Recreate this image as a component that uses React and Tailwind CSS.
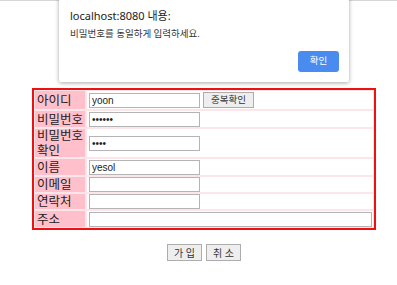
import React from "react";

const ko = "font-['Noto_Sans','Noto_Sans_CJK_KR',sans-serif]";

function Field({ value = "", type = "text", wide = false }) {
  return (
    <input
      type={type}
      defaultValue={value}
      readOnly
      className={`ml-[2px] h-[15px] border border-[#b4b4b4] bg-white px-[2px] text-[10px] leading-none text-[#222] outline-none font-['Liberation_Sans',Arial,sans-serif] ${
        wide ? "w-[283px]" : "w-[111px]"
      }`}
    />
  );
}

function Row({ label, h, children }) {
  return (
    <>
      <div
        className={`flex items-center bg-[#ffc0cb] pl-[2px] text-[12.5px] leading-[15px] text-[#222] ${ko} ${h}`}
      >
        {label}
      </div>
      <div className={`flex items-center bg-white ${h}`}>{children}</div>
    </>
  );
}

export default function App() {
  return (
    <div className="relative h-[285px] w-[397px] overflow-hidden bg-white">
      <div className="h-px w-full bg-[#d6d6d6]" />

      {/* alert dialog over the page */}
      <div
        className={`absolute left-[59px] top-[-8px] h-[90px] w-[290px] rounded-b-[2px] bg-white shadow-[0_1px_4px_rgba(0,0,0,0.35)] ${ko}`}
      >
        <p className="absolute left-[11px] top-[17px] text-[11px] leading-[14px] text-[#222]">
          localhost:8080 내용:
        </p>
        <p className="absolute left-[11px] top-[36px] text-[9.5px] leading-[12px] text-[#333]">
          비밀번호를 동일하게 입력하세요.
        </p>
        <button className="absolute left-[239px] top-[59px] flex h-[21px] w-[41px] items-center justify-center rounded-[3px] bg-[#4a8bf0] text-[9.5px] text-white">
          확인
        </button>
      </div>

      <div className="ml-[32px] mt-[87px] w-[344px] border-2 border-[#ee1111] bg-[#fde6ea] p-px">
        <div className="grid grid-cols-[50px_1fr] gap-[2px]">
          <Row label="아이디" h="h-[18px]">
            <Field value="yoon" />
            <button
              className={`ml-[3px] flex h-[16px] w-[51px] items-center justify-center border border-[#adadad] bg-[#eeeeee] text-[9.5px] leading-none text-[#333] ${ko}`}
            >
              중복확인
            </button>
          </Row>
          <Row label="비밀번호" h="h-[16px]">
            <Field value="yoonys" type="password" />
          </Row>
          <Row label="비밀번호 확인" h="h-[28px]">
            <Field value="1234" type="password" />
          </Row>
          <Row label="이름" h="h-[16px]">
            <Field value="yesol" />
          </Row>
          <Row label="이메일" h="h-[15px]">
            <Field />
          </Row>
          <Row label="연락처" h="h-[15px]">
            <Field />
          </Row>
          <Row label="주소" h="h-[16px]">
            <Field wide />
          </Row>
        </div>
      </div>

      <div className={`ml-[167px] mt-[14px] flex gap-[4px] ${ko}`}>
        <button className="flex h-[17px] w-[35px] items-center justify-center border border-[#adadad] bg-[#eeeeee] text-[10px] leading-none text-[#333]">
          가 입
        </button>
        <button className="flex h-[17px] w-[35px] items-center justify-center border border-[#adadad] bg-[#eeeeee] text-[10px] leading-none text-[#333]">
          취 소
        </button>
      </div>
    </div>
  );
}
